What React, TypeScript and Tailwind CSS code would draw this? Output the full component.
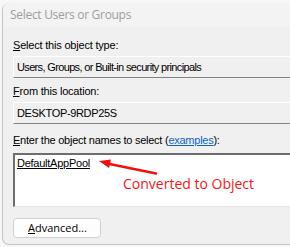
import type { JSX } from 'react';

const dlgFont = { fontFamily: '"Liberation Sans", Arial, sans-serif' };
const uiFont = { fontFamily: '"Open Sans", "Noto Sans", sans-serif' };

function Label({ access, rest }: { access: string; rest: string }): JSX.Element {
  return (
    <div className="h-[13px] text-[11px] leading-[13px] tracking-[-0.2px] text-black">
      <span className="underline underline-offset-[1px]">{access}</span>
      {rest}
    </div>
  );
}

function ReadOnlyBox({ text, tight }: { text: string; tight?: boolean }): JSX.Element {
  return (
    <div
      className={`flex h-[22px] items-center border-t border-l border-t-white border-l-white border-b border-b-[#838383] bg-[#f0f0f0] pl-[3px] text-[11px] text-black ${
        tight ? 'tracking-[-0.65px]' : 'tracking-[-0.35px]'
      }`}
    >
      {text}
    </div>
  );
}

export default function App(): JSX.Element {
  return (
    <div className="h-[247px] w-[290px] overflow-hidden bg-[#f7f7f7]" style={dlgFont}>
      <div className="ml-[2px] mt-[3px] flex h-[242px] flex-col overflow-hidden rounded-tl-[7px] rounded-bl-[7px] border-b border-l border-[#c4c4c4] bg-[#f0f0f0]">
        <div className="flex h-[24px] shrink-0 items-center bg-[#f3f3f3] pl-[7px] text-[12px] tracking-[-0.3px] text-[#9d9d9d]" style={uiFont}>
          Select Users or Groups
        </div>
        <div className="flex flex-col pl-[10px]">
          <div className="mt-[12px]">
            <Label access="S" rest="elect this object type:" />
          </div>
          <div className="mt-[4px]">
            <ReadOnlyBox text="Users, Groups, or Built-in security principals" tight />
          </div>
          <div className="mt-[7px]">
            <Label access="F" rest="rom this location:" />
          </div>
          <div className="mt-[4px]">
            <ReadOnlyBox text="DESKTOP-9RDP25S" />
          </div>
          <div className="mt-[10px]">
            <div className="h-[13px] text-[11px] leading-[13px] tracking-[-0.25px] text-black">
              <span className="underline underline-offset-[1px]">E</span>nter the object names to select (
              <span className="text-[#0b63c4] underline underline-offset-[1px]">examples</span>):
            </div>
          </div>
          <div className="relative mt-[6px] h-[54px] border-t-2 border-l-2 border-b border-t-[#6d6d6d] border-l-[#6d6d6d] border-b-[#e3e3e3] bg-white pl-[2px] pt-[2px]">
            <div className="text-[11px] leading-[13px] tracking-[-0.25px] text-black">
              <span className="underline underline-offset-[1px]">DefaultAppPool</span>
            </div>
            <svg className="absolute left-[84px] top-[4px]" width="60" height="18" viewBox="0 0 60 18">
              <line x1="8" y1="4.5" x2="57" y2="14.5" stroke="#f01010" strokeWidth="2.4" strokeLinecap="round" />
              <polygon points="0,2 12,0.5 10,9" fill="#f01010" />
            </svg>
            <span className="absolute left-[108px] top-[20px] text-[14px] leading-[18px] text-[#f01818]" style={uiFont}>
              Converted to Object
            </span>
          </div>
          <div className="mt-[11px] flex">
            <div className="flex h-[20px] w-[88px] items-center rounded-[4px] border border-[#cfcfcf] bg-[#fdfdfd] pl-[14px] text-[11px] text-black" style={uiFont}>
              <span className="underline underline-offset-[1px]">A</span>dvanced...
            </div>
          </div>
        </div>
      </div>
    </div>
  );
}
